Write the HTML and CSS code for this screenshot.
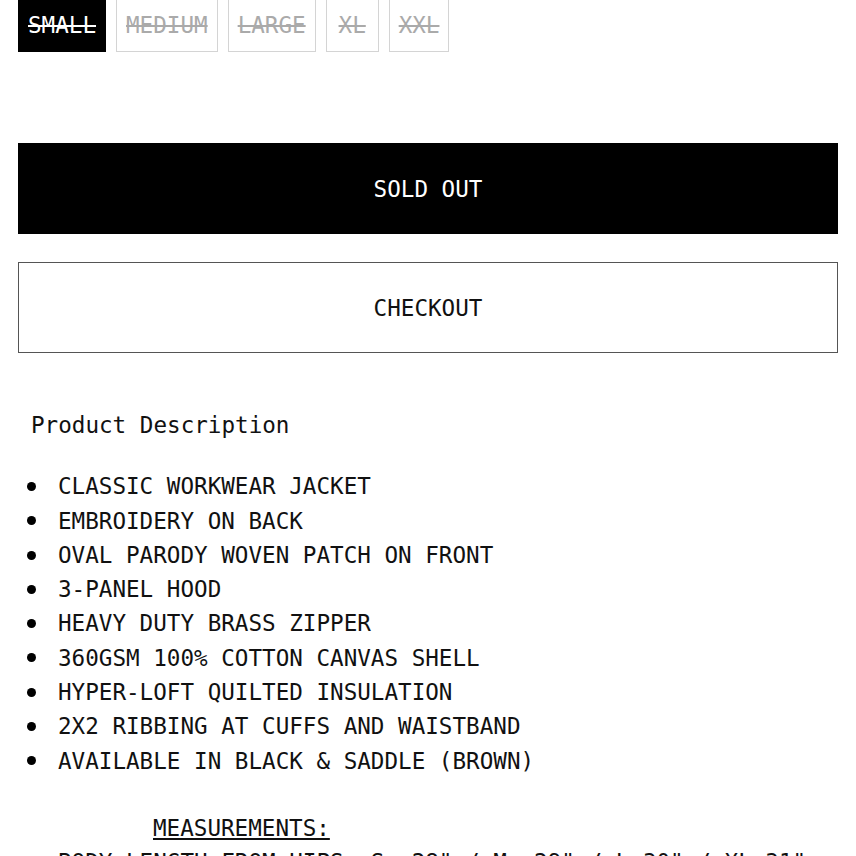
FILE: index.html
```html
<!DOCTYPE html>
<html>
<head>
	<meta charset="UTF-8">
	<title>Workwear Jacket</title>
	<link rel="stylesheet" href="styles.css">
</head>
<body>
<div class="product">
	<div class="sizes">
		<span class="size active">SMALL</span>
		<span class="size">MEDIUM</span>
		<span class="size">LARGE</span>
		<span class="size">XL</span>
		<span class="size">XXL</span>
	</div>
	<button class="btn soldout">SOLD OUT</button>
	<button class="btn checkout">CHECKOUT</button>
	<div class="description">
		<h2 class="desc-title">Product Description</h2>
		<ul class="features">
			<li>CLASSIC WORKWEAR JACKET</li>
			<li>EMBROIDERY ON BACK</li>
			<li>OVAL PARODY WOVEN PATCH ON FRONT</li>
			<li>3-PANEL HOOD</li>
			<li>HEAVY DUTY BRASS ZIPPER</li>
			<li>360GSM 100% COTTON CANVAS SHELL</li>
			<li>HYPER-LOFT QUILTED INSULATION</li>
			<li>2X2 RIBBING AT CUFFS AND WAISTBAND</li>
			<li>AVAILABLE IN BLACK &amp; SADDLE (BROWN)</li>
		</ul>
		<p class="measure-title">MEASUREMENTS:</p>
		<p class="measure">BODY LENGTH FROM HIPS: S: 28" / M: 29" / L:30" / XL:31"</p>
	</div>
</div>
</body>
</html>
```

FILE: styles.css
```css
body {
	background-color: #FFF;
	margin: 0;
	color: #111;
	font-family: "DejaVu Sans Mono", "Liberation Mono", monospace;
	font-size: 22.6px;
	overflow: hidden;
}
.product {
	padding: 0 18px;
	margin-top: -3px;
}
.sizes {
	display: flex;
	gap: 10px;
}
.size {
	display: block;
	box-sizing: border-box;
	min-width: 53px;
	height: 55px;
	line-height: 55px;
	padding: 0 9px;
	border: 1px solid #d4d4d4;
	color: #aaa;
	text-align: center;
	text-decoration: line-through;
}
.size.active {
	background-color: #000;
	border-color: #000;
	color: #FFF;
}
.btn {
	display: block;
	width: 100%;
	height: 91px;
	margin: 0;
	padding: 0;
	font: inherit;
	cursor: pointer;
}
.soldout {
	margin-top: 91px;
	background-color: #000;
	border: none;
	color: #FFF;
}
.checkout {
	margin-top: 28px;
	background-color: #FFF;
	border: 1px solid #555;
	color: #111;
}
.description {
	padding-top: 55px;
	line-height: 34.3px;
}
.desc-title {
	margin: 0;
	padding-left: 13px;
	font-size: inherit;
	font-weight: normal;
}
.features {
	list-style: none;
	margin: 27px 0 0;
	padding: 0 0 0 9px;
}
.features li {
	display: flex;
	align-items: center;
}
.features li::before {
	content: "";
	flex: none;
	width: 9px;
	height: 9px;
	margin-right: 22px;
	border-radius: 50%;
	background-color: #000;
}
.measure-title {
	margin: 33px 0 0 135px;
	text-decoration: underline;
}
.measure {
	margin: 0 0 0 40px;
	white-space: nowrap;
}
```
